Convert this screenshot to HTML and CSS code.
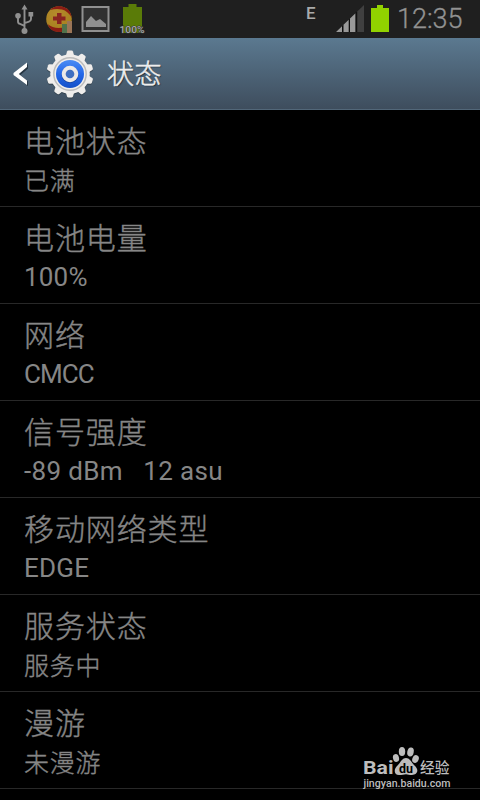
FILE: index.html
```html
<!DOCTYPE html>
<html lang="zh-CN">
<head>
<meta charset="utf-8">
<title>状态</title>
<link rel="stylesheet" href="styles.css">
</head>
<body>
<div class="statusbar">
  <svg class="notices" width="160" height="38" viewBox="0 0 160 38">
    <defs>
      <radialGradient id="ball" cx=".4" cy=".3" r=".8"><stop offset="0" stop-color="#b58a2c"/><stop offset="1" stop-color="#a5801c"/></radialGradient>
    </defs>
    <g fill="none" stroke="#909090" stroke-width="1.9">
      <path d="M24.5 8V31M18 17v4.500q0 2 2 2.400l4.500 2M31 14v5q0 2-2 2.600l-4.500 1.500"/>
    </g>
    <g fill="#909090"><path d="M24.500 4.500l3 5h-6z"/><circle cx="18" cy="15.700" r="2.800"/><path d="M28.500 12h4.700v4.500h-4.700z"/><circle cx="24.500" cy="31" r="3"/></g>
    <circle cx="59" cy="19" r="12.800" fill="url(#ball)"/>
    <path d="M50 10Q54 6 60 6q10 1 12 12-4-7-10-8.500-6-1-12 .5zM47.500 24q5 4 11 4 7 0 12-6-2 10-12 10-8 0-11-8z" fill="#8a1c14"/>
    <path d="M57 13h4.500v3.500h4v4h-4V24H57v-3.500h-4v-4h4z" fill="#8a2420"/>
    <path d="M62 24h5v9h-5z" fill="#50724b"/><path d="M67 21h5v12h-5z" fill="#9b7557"/>
    <rect x="82.500" y="7" width="26" height="24" fill="#303030" stroke="#909090" stroke-width="2"/>
    <path d="M86 27v-5l5-6 5 5 4-2 6 5v3z" fill="#909090"/>
    <path d="M123 7h5.500V4h8v3h5.500v26h-19z" fill="#5a7b08"/>
    <text class="charge" x="119.500" y="32.500" textLength="25" lengthAdjust="spacingAndGlyphs">100%</text>
  </svg>
  <span class="edge">E</span>
  <svg class="radio" width="53" height="38" viewBox="0 0 53 38">
    <path d="M0 32L28 5v27z" fill="#404040"/>
    <path d="M0 32L20 12.700V32z" fill="#0d0d0d"/>
    <path d="M0 32L6 26.200V32zM7.500 32v-7.200l5.200-5V32zM14 32V18.500l5.500-5.300V32z" fill="#999"/>
    <path d="M20.500 32V11.800" stroke="#111" stroke-width="1.500"/>
    <path d="M35 8h6V5h6v3h6v24H35z" fill="#91d100"/>
  </svg>
  <time class="clock">12:35</time>
</div>
<header class="header">
  <svg class="back" width="18" height="26" viewBox="0 0 18 26"><path d="M3 14L16 3v4.500L8.500 14l7.500 6.500V25L3 15z" fill="#263542"/><path d="M1.500 12L15 1.500V6L6.800 13l8.200 6.500V24L1.500 14z" fill="#fff"/></svg>
  <svg class="gear" width="50" height="50" viewBox="-25 -25 50 50">
    <defs>
      <linearGradient id="blue" x2="0" y2="1"><stop stop-color="#4a8cf4"/><stop offset=".5" stop-color="#2467e8"/><stop offset="1" stop-color="#1450c8"/></linearGradient>
      <path id="tooth" d="M-4.500-17L-3-22.500q.3-1 1.500-1h3q1.200 0 1.500 1L4.500-17z"/>
      <g id="cog"><circle r="19.800"/><use href="#tooth"/><use href="#tooth" transform="rotate(36)"/><use href="#tooth" transform="rotate(72)"/><use href="#tooth" transform="rotate(108)"/><use href="#tooth" transform="rotate(144)"/><use href="#tooth" transform="rotate(180)"/><use href="#tooth" transform="rotate(216)"/><use href="#tooth" transform="rotate(252)"/><use href="#tooth" transform="rotate(288)"/><use href="#tooth" transform="rotate(324)"/></g>
    </defs>
    <use href="#cog" y="1" fill="#34434f"/>
    <use href="#cog" fill="#efedeb"/>
    <circle r="16.200" fill="none" stroke="#bcbcbc" stroke-width="1.500"/>
    <circle r="14" fill="url(#blue)"/>
    <circle cy=".6" r="6.300" fill="none" stroke="#123f9c" stroke-width="4.200"/>
    <circle r="4.500" fill="#3f6fc0"/>
    <circle r="6.300" fill="none" stroke="#ebe9e7" stroke-width="4"/>
  </svg>
  <h1 class="title">状态</h1>
</header>
<main class="list">
  <div class="row"><div class="name">电池状态</div><div class="value">已满</div></div>
  <div class="row"><div class="name">电池电量</div><div class="value latin">100%</div></div>
  <div class="row"><div class="name">网络</div><div class="value latin caps">CMCC</div></div>
  <div class="row"><div class="name">信号强度</div><div class="value latin signal">-89 dBm &nbsp; 12 asu</div></div>
  <div class="row"><div class="name">移动网络类型</div><div class="value latin">EDGE</div></div>
  <div class="row"><div class="name">服务状态</div><div class="value">服务中</div></div>
  <div class="row"><div class="name">漫游</div><div class="value">未漫游</div></div>
</main>
<svg class="watermark" width="100" height="50" viewBox="0 0 100 50">
  <g fill="#bdbdbd">
    <text class="brand" x="3" y="33.500" textLength="30.500" lengthAdjust="spacingAndGlyphs">Bai</text>
    <ellipse cx="36" cy="18" rx="3" ry="4" transform="rotate(-15 36 18)"/>
    <ellipse cx="42" cy="11.500" rx="3.200" ry="4.500"/>
    <ellipse cx="50.500" cy="12" rx="3.200" ry="4.500" transform="rotate(12 50.500 12)"/>
    <ellipse cx="55.500" cy="19" rx="3.200" ry="4" transform="rotate(20 55.500 19)"/>
    <path d="M46 18c4 0 5 4 8 7 6 5 3 10-2 10-3 0-4-.8-6-.8s-4 .8-7 .8c-5 0-6-6-1-10 3-3 4-7 8-7z"/>
    <text class="brand-cn" x="60" y="32.500" textLength="29.500" lengthAdjust="spacingAndGlyphs">经验</text>
    <text class="site" x="3.500" y="46.500" textLength="87" lengthAdjust="spacingAndGlyphs">jingyan.baidu.com</text>
  </g>
  <text class="du" x="39" y="33" textLength="14" lengthAdjust="spacingAndGlyphs">du</text>
</svg>
</body>
</html>
```
FILE: styles.css
```css
* { box-sizing: border-box; }
body {
  margin: 0;
  width: 480px;
  height: 800px;
  overflow: hidden;
  position: relative;
  background: #000;
  color: #868686;
  font-family: Roboto, "Noto Sans CJK SC", sans-serif;
}
svg { display: block; flex: none; }
.statusbar {
  display: flex;
  height: 38px;
  background: #1f1f1f;
}
.charge {
  font: 500 9.5px Roboto, sans-serif;
  fill: #a8a8a8;
  stroke: #333;
  stroke-width: 1px;
  paint-order: stroke;
}
.edge {
  width: 30px;
  margin-left: 146px;
  padding-top: 4px;
  font-size: 17px;
  line-height: 19px;
  font-weight: 500;
  color: #aaa;
}
.clock {
  margin-left: 8px;
  font-size: 27px;
  line-height: 38px;
  color: #929292;
  font-weight: 300;
  -webkit-text-stroke: .3px #929292;
}
.header {
  display: flex;
  align-items: center;
  height: 72px;
  padding-left: 12px;
  background: linear-gradient(#5b7990, #3e4d5d);
  border-bottom: 1px solid #526779;
}
.gear { margin-left: 15px; }
.title {
  margin: 3px 0 0 12px;
  font-size: 27px;
  line-height: 36px;
  letter-spacing: .5px;
  font-weight: 300;
  -webkit-text-stroke: .5px #eee;
  color: #eee;
  text-shadow: 1px 1px 1px #222e39;
}
.row {
  height: 97px;
  padding: 12px 24px 0;
  border-bottom: 1px solid #282828;
}
.name {
  font-size: 30px;
  line-height: 40px;
  letter-spacing: .9px;
  font-weight: 300;
  -webkit-text-stroke: .4px #868686;
}
.value {
  font-size: 25px;
  line-height: 40px;
  letter-spacing: .8px;
  font-weight: 300;
  white-space: nowrap;
  -webkit-text-stroke: .4px #868686;
}
.latin {
  margin-top: -2px;
  font-size: 26px;
  letter-spacing: .2px;
  font-weight: 400;
  -webkit-text-stroke: 0;
}
.caps { letter-spacing: -.9px; }
.signal { letter-spacing: .35px; }
.watermark {
  position: absolute;
  left: 360px;
  top: 740px;
}
.brand { font: 700 19px Roboto, sans-serif; }
.brand-cn { font: 500 15px "Noto Sans CJK SC", sans-serif; }
.site { font: 500 10px Roboto, sans-serif; }
.du { font: 700 12px Roboto, sans-serif; fill: #000; }
```
